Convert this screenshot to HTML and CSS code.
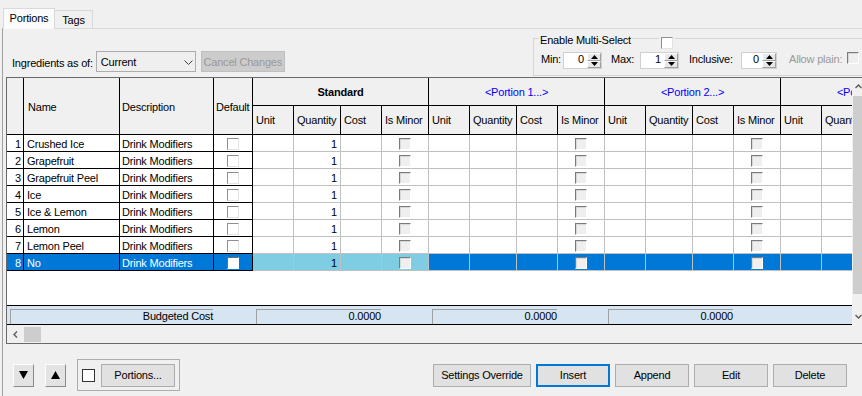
FILE: index.html
```html
<!DOCTYPE html>
<html>
<head>
    <meta charset="UTF-8">
    <title>Portions</title>
    <link rel="stylesheet" href="styles.css">
</head>
<body>
    <div class="tabs">
        <div class="tab active">Portions</div>
        <div class="tab">Tags</div>
    </div>
    <div class="panel">
        <div class="toolbar">
            <div class="asof">
                <span class="lbl">Ingredients as of:</span>
                <div class="combo">
                    <span>Current</span>
                    <svg width="9" height="5" viewBox="0 0 9 5"><polyline points="0.5,0.5 4.5,4.5 8.5,0.5" fill="none" stroke="#404040" stroke-width="1"/></svg>
                </div>
                <div class="btn cancel">Cancel Changes</div>
            </div>
            <div class="group multi">
                <span class="group-title">Enable Multi-Select</span>
                <span class="group-check"><i class="chk"></i></span>
                <span class="lbl w-min">Min:</span>
                <div class="spin w39">
                    <span class="spin-val">0</span>
                    <span class="spin-btns">
                        <span class="spin-b"><svg width="7" height="4" viewBox="0 0 7 4"><polygon points="0,4 7,4 3.5,0" fill="#000"/></svg></span>
                        <span class="spin-b"><svg width="7" height="4" viewBox="0 0 7 4"><polygon points="0,0 7,0 3.5,4" fill="#000"/></svg></span>
                    </span>
                </div>
                <span class="lbl w-max">Max:</span>
                <div class="spin w39">
                    <span class="spin-val">1</span>
                    <span class="spin-btns">
                        <span class="spin-b"><svg width="7" height="4" viewBox="0 0 7 4"><polygon points="0,4 7,4 3.5,0" fill="#000"/></svg></span>
                        <span class="spin-b"><svg width="7" height="4" viewBox="0 0 7 4"><polygon points="0,0 7,0 3.5,4" fill="#000"/></svg></span>
                    </span>
                </div>
                <span class="lbl w-inc">Inclusive:</span>
                <div class="spin w36">
                    <span class="spin-val">0</span>
                    <span class="spin-btns">
                        <span class="spin-b"><svg width="7" height="4" viewBox="0 0 7 4"><polygon points="0,4 7,4 3.5,0" fill="#000"/></svg></span>
                        <span class="spin-b"><svg width="7" height="4" viewBox="0 0 7 4"><polygon points="0,0 7,0 3.5,4" fill="#000"/></svg></span>
                    </span>
                </div>
                <span class="lbl w-plain">Allow plain:</span>
                <i class="chk dis plain"></i>
            </div>
        </div>

        <div class="gridbox">
            <div class="gridview">
                <div class="cells">
                    <div class="c h span2"></div>
                    <div class="c h span2 nmh">Name</div>
                    <div class="c h span2">Description</div>
                    <div class="c h span2">Default</div>
                    <div class="c h grp bold">Standard</div>
                    <div class="c h grp blue">&lt;Portion 1...&gt;</div>
                    <div class="c h grp blue">&lt;Portion 2...&gt;</div>
                    <div class="c h grp blue">&lt;Portion 3...&gt;</div>
                    <div class="c h">Unit</div><div class="c h">Quantity</div><div class="c h">Cost</div><div class="c h">Is Minor</div>
                    <div class="c h">Unit</div><div class="c h">Quantity</div><div class="c h">Cost</div><div class="c h">Is Minor</div>
                    <div class="c h">Unit</div><div class="c h">Quantity</div><div class="c h">Cost</div><div class="c h">Is Minor</div>
                    <div class="c h">Unit</div><div class="c h">Quantity</div><div class="c h">Cost</div><div class="c h">Is Minor</div>

                    <div class="row">
                        <div class="c fz rn">1</div><div class="c fz">Crushed Ice</div><div class="c fz ds">Drink Modifiers</div><div class="c fz ck"><i class="chk"></i></div>
                        <div class="c std"></div><div class="c std num">1</div><div class="c std"></div><div class="c std ck"><i class="chk dis"></i></div>
                        <div class="c"></div><div class="c"></div><div class="c"></div><div class="c ck"><i class="chk dis"></i></div>
                        <div class="c"></div><div class="c"></div><div class="c"></div><div class="c ck"><i class="chk dis"></i></div>
                        <div class="c"></div><div class="c"></div><div class="c"></div><div class="c ck"><i class="chk dis"></i></div>
                    </div>
                    <div class="row">
                        <div class="c fz rn">2</div><div class="c fz">Grapefruit</div><div class="c fz ds">Drink Modifiers</div><div class="c fz ck"><i class="chk"></i></div>
                        <div class="c std"></div><div class="c std num">1</div><div class="c std"></div><div class="c std ck"><i class="chk dis"></i></div>
                        <div class="c"></div><div class="c"></div><div class="c"></div><div class="c ck"><i class="chk dis"></i></div>
                        <div class="c"></div><div class="c"></div><div class="c"></div><div class="c ck"><i class="chk dis"></i></div>
                        <div class="c"></div><div class="c"></div><div class="c"></div><div class="c ck"><i class="chk dis"></i></div>
                    </div>
                    <div class="row">
                        <div class="c fz rn">3</div><div class="c fz">Grapefruit Peel</div><div class="c fz ds">Drink Modifiers</div><div class="c fz ck"><i class="chk"></i></div>
                        <div class="c std"></div><div class="c std num">1</div><div class="c std"></div><div class="c std ck"><i class="chk dis"></i></div>
                        <div class="c"></div><div class="c"></div><div class="c"></div><div class="c ck"><i class="chk dis"></i></div>
                        <div class="c"></div><div class="c"></div><div class="c"></div><div class="c ck"><i class="chk dis"></i></div>
                        <div class="c"></div><div class="c"></div><div class="c"></div><div class="c ck"><i class="chk dis"></i></div>
                    </div>
                    <div class="row">
                        <div class="c fz rn">4</div><div class="c fz">Ice</div><div class="c fz ds">Drink Modifiers</div><div class="c fz ck"><i class="chk"></i></div>
                        <div class="c std"></div><div class="c std num">1</div><div class="c std"></div><div class="c std ck"><i class="chk dis"></i></div>
                        <div class="c"></div><div class="c"></div><div class="c"></div><div class="c ck"><i class="chk dis"></i></div>
                        <div class="c"></div><div class="c"></div><div class="c"></div><div class="c ck"><i class="chk dis"></i></div>
                        <div class="c"></div><div class="c"></div><div class="c"></div><div class="c ck"><i class="chk dis"></i></div>
                    </div>
                    <div class="row">
                        <div class="c fz rn">5</div><div class="c fz">Ice &amp; Lemon</div><div class="c fz ds">Drink Modifiers</div><div class="c fz ck"><i class="chk"></i></div>
                        <div class="c std"></div><div class="c std num">1</div><div class="c std"></div><div class="c std ck"><i class="chk dis"></i></div>
                        <div class="c"></div><div class="c"></div><div class="c"></div><div class="c ck"><i class="chk dis"></i></div>
                        <div class="c"></div><div class="c"></div><div class="c"></div><div class="c ck"><i class="chk dis"></i></div>
                        <div class="c"></div><div class="c"></div><div class="c"></div><div class="c ck"><i class="chk dis"></i></div>
                    </div>
                    <div class="row">
                        <div class="c fz rn">6</div><div class="c fz">Lemon</div><div class="c fz ds">Drink Modifiers</div><div class="c fz ck"><i class="chk"></i></div>
                        <div class="c std"></div><div class="c std num">1</div><div class="c std"></div><div class="c std ck"><i class="chk dis"></i></div>
                        <div class="c"></div><div class="c"></div><div class="c"></div><div class="c ck"><i class="chk dis"></i></div>
                        <div class="c"></div><div class="c"></div><div class="c"></div><div class="c ck"><i class="chk dis"></i></div>
                        <div class="c"></div><div class="c"></div><div class="c"></div><div class="c ck"><i class="chk dis"></i></div>
                    </div>
                    <div class="row">
                        <div class="c fz rn">7</div><div class="c fz">Lemon Peel</div><div class="c fz ds">Drink Modifiers</div><div class="c fz ck"><i class="chk"></i></div>
                        <div class="c std"></div><div class="c std num">1</div><div class="c std"></div><div class="c std ck"><i class="chk dis"></i></div>
                        <div class="c"></div><div class="c"></div><div class="c"></div><div class="c ck"><i class="chk dis"></i></div>
                        <div class="c"></div><div class="c"></div><div class="c"></div><div class="c ck"><i class="chk dis"></i></div>
                        <div class="c"></div><div class="c"></div><div class="c"></div><div class="c ck"><i class="chk dis"></i></div>
                    </div>
                    <div class="row sel">
                        <div class="c fz rn">8</div><div class="c fz">No</div><div class="c fz ds">Drink Modifiers</div><div class="c fz ck"><i class="chk"></i></div>
                        <div class="c std"></div><div class="c std num">1</div><div class="c std"></div><div class="c std ck"><i class="chk dis"></i></div>
                        <div class="c"></div><div class="c"></div><div class="c"></div><div class="c ck"><i class="chk dis"></i></div>
                        <div class="c"></div><div class="c"></div><div class="c"></div><div class="c ck"><i class="chk dis"></i></div>
                        <div class="c"></div><div class="c"></div><div class="c"></div><div class="c ck"><i class="chk dis"></i></div>
                    </div>
                </div>
                <div class="filler"></div>
                <div class="footer">
                    <div class="fcell first">Budgeted Cost</div>
                    <div class="fcell">0.0000</div>
                    <div class="fcell">0.0000</div>
                    <div class="fcell">0.0000</div>
                </div>
            </div>
            <div class="vscroll">
                <div class="arrow"><svg width="7" height="5" viewBox="0 0 7 5"><polyline points="0.5,4 3.5,1 6.5,4" fill="none" stroke="#606060" stroke-width="1.5"/></svg></div>
                <div class="vthumb"></div>
                <div class="arrow"><svg width="7" height="5" viewBox="0 0 7 5"><polyline points="0.5,1 3.5,4 6.5,1" fill="none" stroke="#606060" stroke-width="1.5"/></svg></div>
            </div>
            <div class="hscroll">
                <div class="harrow"><svg width="5" height="7" viewBox="0 0 5 7"><polyline points="4,0.5 1,3.5 4,6.5" fill="none" stroke="#606060" stroke-width="1.5"/></svg></div>
                <div class="hthumb"></div>
            </div>
            <div class="corner"></div>
        </div>

        <div class="actions">
            <div class="btn raised"><svg width="9" height="8" viewBox="0 0 9 8"><polygon points="0,0 9,0 4.5,8" fill="#000"/></svg></div>
            <div class="btn raised"><svg width="9" height="8" viewBox="0 0 9 8"><polygon points="0,8 9,8 4.5,0" fill="#000"/></svg></div>
            <div class="pgroup">
                <i class="chk flat"></i>
                <div class="btn portions">Portions...</div>
            </div>
            <div class="right-btns">
                <div class="btn wide">Settings Override</div>
                <div class="btn std-w focus">Insert</div>
                <div class="btn std-w">Append</div>
                <div class="btn std-w">Edit</div>
                <div class="btn std-w">Delete</div>
            </div>
        </div>
    </div>
</body>
</html>
```

FILE: styles.css
```css
body{
    margin:0;
    width:862px;
    height:396px;
    overflow:hidden;
    background:#f0f0f0;
    font:11px "Liberation Sans",Arial,sans-serif;
    letter-spacing:-0.2px;
    color:#000;
}
i{font-style:normal;}

/* tabs */
.tabs{
    position:relative;
    z-index:1;
    display:flex;
    align-items:flex-end;
    height:29px;
    margin-bottom:-1px;
    padding-left:3px;
}
.tab{
    box-sizing:border-box;
    height:18px;
    width:38px;
    margin-bottom:1px;
    border:1px solid #d9d9d9;
    border-left:none;
    border-bottom:none;
    text-align:center;
    line-height:18px;
}
.tab.active{
    width:52px;
    height:21px;
    margin-bottom:0;
    border-left:1px solid #d9d9d9;
    background:#fbfbfb;
    line-height:18px;
}

.panel{
    height:367px;
    margin-left:2px;
    border-top:1px solid #d9d9d9;
    border-left:1px solid #a0a0a0;
}

/* top toolbar */
.toolbar{
    display:flex;
    align-items:flex-end;
    height:48px;
    padding-left:9px;
}
.asof{
    display:flex;
    align-items:center;
    margin-bottom:5px;
}
.asof .lbl{margin-right:3px;padding-top:2px;}
.combo{
    box-sizing:border-box;
    display:flex;
    align-items:center;
    justify-content:space-between;
    width:100px;
    height:21px;
    padding:1px 2px 0 4px;
    border:1px solid #adadad;
    background:#efefef;
}
.btn{
    box-sizing:border-box;
    display:flex;
    align-items:center;
    justify-content:center;
    height:23px;
    border:1px solid #adadad;
    background:#e1e1e1;
    white-space:nowrap;
}
.btn.cancel{
    width:84px;
    height:21px;
    margin-left:5px;
    border-color:#bfbfbf;
    background:#cccccc;
    color:#999;
}

.group{
    position:relative;
    box-sizing:border-box;
    display:flex;
    align-items:flex-start;
    width:345px;
    height:38px;
    margin:0 -16px 1px auto;
    padding:13px 0 0 7px;
    border:1px solid #d5d5d5;
}
.group-title{
    position:absolute;
    top:-5px;
    left:5px;
    padding:0 1px;
    background:#f0f0f0;
    line-height:13px;
}
.group-check{
    position:absolute;
    top:-2px;
    left:125px;
    padding:0 2px;
    background:#f0f0f0;
    line-height:0;
}
.group .lbl{line-height:13px;padding-top:1px;}
.w-min{width:22px;}
.w-max{width:29px;margin-left:9px;}
.w-inc{width:52px;margin-left:10px;}
.w-plain{width:58px;margin-left:12px;color:#999;}

.spin{
    box-sizing:border-box;
    display:flex;
    height:17px;
    border:1px solid #d0d0d0;
    background:#fff;
}
.w39{width:39px;}
.w36{width:36px;}
.spin-val{
    flex:1;
    text-align:right;
    padding-right:3px;
    line-height:13px;
}
.spin-btns{
    display:flex;
    flex-direction:column;
    width:14px;
}
.spin-b{
    box-sizing:border-box;
    flex:1;
    display:flex;
    align-items:center;
    justify-content:center;
    background:#e8e8e8;
    border:1px solid;
    border-color:#fff #a0a0a0 #a0a0a0 #fff;
}

/* checkboxes */
.chk{
    display:inline-block;
    box-sizing:border-box;
    width:12px;
    height:12px;
    border:1px solid;
    border-color:#8f8f8f #e3e3e3 #e3e3e3 #8f8f8f;
    background:#fff;
}
.chk.dis{
    border-color:#7a7a7a #fff #fff #7a7a7a;
    background:#efefef;
    box-shadow:inset 1px 1px 0 #d8d8d8;
}
.chk.flat{
    width:13px;
    height:13px;
    border:1px solid #333;
    background:#fff;
}

/* grid */
.gridbox{
    display:grid;
    grid-template-columns:845px 17px;
    grid-template-rows:247px 18px;
    width:max-content;
    margin-left:3px;
    border:1px solid #696969;
}
.gridview{
    overflow:hidden;
    display:flex;
    flex-direction:column;
    background:#fff;
}
.cells{
    display:grid;
    grid-template-columns:17px 96px 94px 39px repeat(4,41px 47px 41px 47px);
    grid-template-rows:28px 29px repeat(8,17px);
    width:max-content;
}
.row{display:contents;}
.c{
    box-sizing:border-box;
    overflow:hidden;
    padding:2px 0 0 3px;
    border-right:1px solid #c0c0c0;
    border-bottom:1px solid #c0c0c0;
    background:#fff;
    line-height:14px;
    white-space:nowrap;
}
.c.h{
    display:flex;
    align-items:center;
    padding:0 0 0 3px;
    border-color:#000;
    background:#f0f0f0;
}
.c.h.span2{grid-row:span 2;padding-left:2px;padding-top:2px;}
.c.h.nmh{padding-left:4px;}
.c.h.grp{grid-column:span 4;justify-content:center;padding:0;}
.bold{font-weight:bold;}
.blue{color:#0000ff;}
.c.fz{border-color:#000;}
.c.ds{padding-left:2px;}
.c.rn{text-align:right;padding:2px 2px 0 0;}
.c.num{text-align:right;padding-right:3px;}
.c.ck{
    display:flex;
    justify-content:center;
    align-items:center;
    padding:2px 0 0 0;
}
.row.sel .c{background:#0078d7;color:#fff;}
.row.sel .c.std{background:#7ecde2;color:#000;}
.row.sel .c.fz .chk{border-color:#6d6d6d #fff #fff #6d6d6d;}

.filler{height:34px;background:#fff;}
.footer{
    display:flex;
    height:15px;
    padding-top:3px;
    border-top:1px solid #000;
    border-bottom:1px solid #000;
    background:#d7e4f2;
}
.fcell{
    box-sizing:border-box;
    flex:none;
    width:125px;
    height:15px;
    margin-left:51px;
    border-top:1px solid #a0a0a0;
    border-left:1px solid #a0a0a0;
    text-align:right;
    line-height:13px;
    white-space:nowrap;
}
.fcell.first{width:203px;margin-left:3px;}
.fcell.first + .fcell{margin-left:43px;}

.vscroll{
    display:flex;
    flex-direction:column;
    background:#f0f0f0;
}
.arrow{
    display:flex;
    align-items:center;
    height:17px;
    padding-left:3px;
}
.vthumb{
    height:198px;
    margin:1px 0 auto 1px;
    background:#cdcdcd;
}
.hscroll{
    display:flex;
    align-items:center;
    background:#f0f0f0;
}
.harrow{
    display:flex;
    justify-content:center;
    width:17px;
}
.hthumb{
    width:17px;
    height:15px;
    background:#cdcdcd;
}
.corner{background:#f0f0f0;}

/* bottom buttons */
.actions{
    display:flex;
    align-items:center;
    height:32px;
    margin-top:15px;
    padding:0 15px 0 10px;
}
.btn.raised{
    width:21px;
    border-color:#fdfdfd #8a8a8a #8a8a8a #fdfdfd;
    background:#e3e3e3;
}
.btn.raised + .btn.raised{margin-left:11px;}
.pgroup{
    box-sizing:border-box;
    display:flex;
    align-items:center;
    height:32px;
    margin-left:11px;
    padding:0 4px;
    border:1px solid #adadad;
}
.btn.portions{width:74px;margin-left:6px;}
.right-btns{
    display:flex;
    gap:5px;
    margin-left:auto;
}
.btn.wide{width:98px;}
.btn.std-w{width:74px;}
.btn.focus{border:2px solid #0078d7;}
```
